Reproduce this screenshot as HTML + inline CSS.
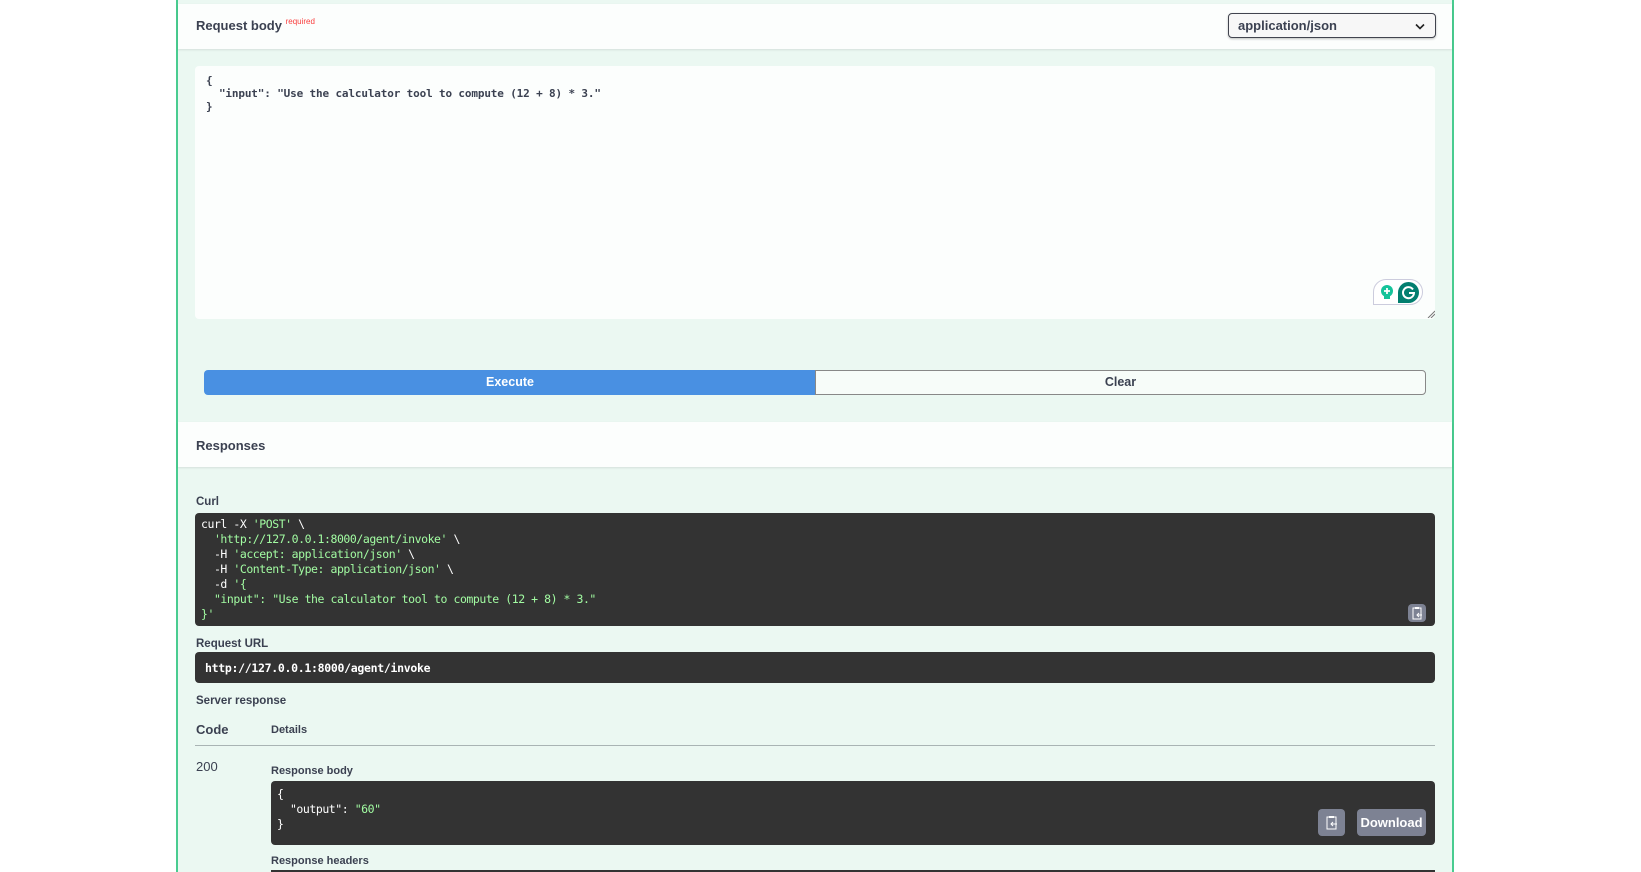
<!DOCTYPE html>
<html><head><meta charset="utf-8"><style>
*{margin:0;padding:0;box-sizing:border-box}
body{width:1641px;height:872px;background:#fff;position:relative;overflow:hidden;font-family:"Liberation Sans",sans-serif;color:#3b4151}
.a{position:absolute}
.sec{left:176px;top:0;width:1278px;height:872px;background:#ebf8f2;border-left:2px solid #49cc90;border-right:2px solid #49cc90}
.band{left:178px;width:1274px;background:rgba(255,255,255,.85);box-shadow:0 1px 2px rgba(0,0,0,.1)}
.lbl{font-size:11.5px;font-weight:bold;color:#3b4151}
.mono{font-family:"DejaVu Sans Mono","Liberation Mono",monospace;font-size:11.5px;white-space:pre;line-height:15px;letter-spacing:-0.45px}
.dark{background:#333;border-radius:4px}
.g{color:#a2fca2}
.btnc{background:#7d8293;border-radius:4px}
</style></head><body>
<div class="a sec"></div>
<div class="a band" style="top:4px;height:45px"></div>
<div class="a" style="left:196px;top:18px;font-size:13px;font-weight:bold">Request body <span style="color:#f93e3e;font-size:8px;font-weight:normal;position:relative;top:-6px">required</span></div>
<div class="a" style="left:1228px;top:13px;width:208px;height:25px;border:1.5px solid #41444e;border-radius:4px;background:#f7f7f7;box-shadow:0 1px 2px rgba(0,0,0,.25);font-size:13px;font-weight:bold;padding:4px 9px">application/json<svg class="a" style="right:10px;top:9px" width="10" height="7" viewBox="0 0 10 7"><path d="M1 1.5l4 4 4-4" fill="none" stroke="#222" stroke-width="1.6"/></svg></div>
<div class="a" style="left:195px;top:66px;width:1240px;height:253px;background:#fcfefd;border-radius:4px"></div>
<div class="a mono" style="left:206px;top:74px;color:#3b4151;font-weight:bold;line-height:13px;font-size:11px;letter-spacing:-0.15px">{
  "input": "Use the calculator tool to compute (12 + 8) * 3."
}</div>
<div class="a" style="left:1373px;top:279px;width:50px;height:26px;border:1px solid #ccd;border-radius:13px 13px 13px 0;background:#fff"></div>
<svg class="a" style="left:1380px;top:284px" width="14" height="18" viewBox="0 0 14 18"><circle cx="7" cy="7" r="6" fill="#15c39a"/><rect x="4" y="12" width="6" height="3" fill="#15c39a"/><path d="M7 4v6M4 7h6" stroke="#fff" stroke-width="1.8"/></svg>
<svg class="a" style="left:1398px;top:282px" width="21" height="21" viewBox="0 0 21 21"><path d="M0 21V10.5A10.5 10.5 0 1 1 10.5 21z" fill="#027e6f"/><path d="M15 7.5A5.5 5.5 0 1 0 16 11h-5" fill="none" stroke="#fff" stroke-width="2"/></svg>
<svg class="a" style="left:1427px;top:310px" width="8" height="8"><path d="M1 8L8 1M4 8L8 4" stroke="#777" stroke-width="1"/></svg>
<div class="a" style="left:204px;top:370px;width:612px;height:25px;background:#4990e2;border-radius:4px 0 0 4px;color:#fff;font-weight:bold;font-size:12.5px;text-align:center;line-height:25px">Execute</div>
<div class="a" style="left:815px;top:370px;width:611px;height:25px;border:1.5px solid #888;border-radius:0 4px 4px 0;background:#f7fcf9;font-weight:bold;font-size:12.5px;text-align:center;line-height:22px">Clear</div>
<div class="a band" style="top:422px;height:45px"></div>
<div class="a" style="left:196px;top:438px;font-size:13px;font-weight:bold">Responses</div>
<div class="a lbl" style="left:196px;top:496px">Curl</div>
<div class="a dark" style="left:195px;top:513px;width:1240px;height:113px"></div>
<div class="a mono" style="left:201px;top:517px;color:#fff">curl -X <span class="g">'POST'</span> \
  <span class="g">'http://127.0.0.1:8000/agent/invoke'</span> \
  -H <span class="g">'accept: application/json'</span> \
  -H <span class="g">'Content-Type: application/json'</span> \
  -d <span class="g">'{
  "input": "Use the calculator tool to compute (12 + 8) * 3."
}'</span></div>
<div class="a btnc" style="left:1408px;top:604px;width:18px;height:18px"><svg width="18" height="18"><rect x="5" y="4" width="8" height="11" fill="none" stroke="#fff"/><rect x="7" y="3" width="4" height="2" fill="#fff"/><path d="M9 11h5M11 9l-2 2 2 2" stroke="#fff" fill="none"/></svg></div>
<div class="a lbl" style="left:196px;top:638px">Request URL</div>
<div class="a dark" style="left:195px;top:652px;width:1240px;height:31px"></div>
<div class="a mono" style="left:205px;top:661px;color:#fff;font-weight:bold;letter-spacing:-0.3px">http://127.0.0.1:8000/agent/invoke</div>
<div class="a lbl" style="left:196px;top:695px">Server response</div>
<div class="a" style="left:196px;top:722px;font-size:13px;font-weight:bold">Code</div>
<div class="a lbl" style="left:271px;top:724px;font-size:11px">Details</div>
<div class="a" style="left:195px;top:745px;width:1240px;height:1px;background:#a9b4b4"></div>
<div class="a" style="left:196px;top:759px;font-size:13px">200</div>
<div class="a lbl" style="left:271px;top:765px;font-size:11px">Response body</div>
<div class="a dark" style="left:271px;top:781px;width:1164px;height:64px"></div>
<div class="a mono" style="left:277px;top:787px;color:#fff">{
  "output": <span class="g">"60"</span>
}</div>
<div class="a btnc" style="left:1318px;top:809px;width:27px;height:27px"><svg width="27" height="27"><rect x="9" y="8" width="9" height="12" fill="none" stroke="#fff"/><rect x="11" y="7" width="5" height="2" fill="#fff"/><path d="M13 15h6M15 13l-2 2 2 2" stroke="#fff" fill="none"/></svg></div>
<div class="a btnc" style="left:1357px;top:809px;width:69px;height:27px;color:#fff;font-weight:bold;font-size:13px;text-align:center;line-height:27px">Download</div>
<div class="a lbl" style="left:271px;top:855px;font-size:11px">Response headers</div>
<div class="a" style="left:271px;top:870px;width:1164px;height:2px;background:#333"></div>
</body></html>
